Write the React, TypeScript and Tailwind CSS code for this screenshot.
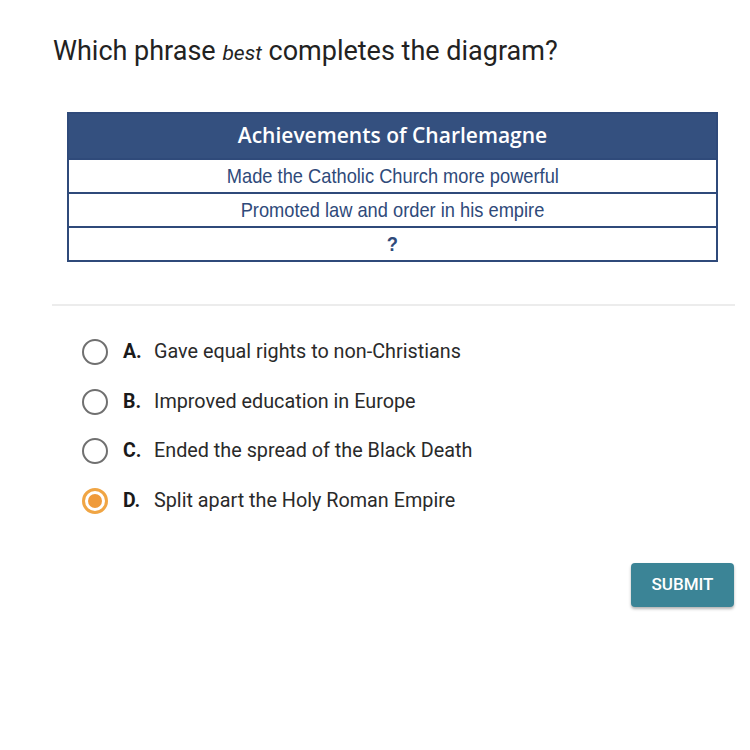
import React from "react";

const OPTIONS = [
  { letter: "A.", text: "Gave equal rights to non-Christians" },
  { letter: "B.", text: "Improved education in Europe" },
  { letter: "C.", text: "Ended the spread of the Black Death" },
  { letter: "D.", text: "Split apart the Holy Roman Empire" },
];

const ROWS = ["Made the Catholic Church more powerful", "Promoted law and order in his empire", "?"];

export default function App() {
  const selected = 3;
  return (
    <div className="w-[750px] h-[750px] bg-white font-['Roboto',sans-serif] text-[#222]">
      <div className="pt-[33px] pl-[53px]">
        <h1 className="text-[27px] leading-[36px] font-normal">
          Which phrase <em className="text-[21px] italic">best</em> completes the diagram?
        </h1>
      </div>

      <div className="ml-[67px] mt-[41px] w-[651px] border-2 border-[#2f4a7a] bg-[#2f4a7a]">
        <div className="h-[44px] flex items-center justify-center bg-[#34507f] text-white text-[21px] font-['Open_Sans',sans-serif] font-semibold">
          Achievements of Charlemagne
        </div>
        {ROWS.map((r, i) => (
          <div
            key={i}
            className="h-[32px] mt-[2px] flex items-center justify-center bg-white text-[#2f4a7a] font-['Liberation_Sans',sans-serif]"
          >
            <span className={i === 2 ? "inline-block text-[21px] font-bold scale-x-[0.87]" : "inline-block text-[21px] scale-x-[0.87]"}>{r}</span>
          </div>
        ))}
      </div>

      <div className="ml-[52px] mt-[42px] w-[683px] h-[2px] bg-[#ececec]" />

      <div className="mt-[33px] ml-[82px] flex flex-col gap-[23.5px]">
        {OPTIONS.map((o, i) => (
          <div key={o.letter} className="flex items-center h-[26px]">
            {i === selected ? (
              <span className="w-[26px] h-[26px] rounded-full border-[3px] border-[#f0a544] flex items-center justify-center">
                <span className="w-[14px] h-[14px] rounded-full bg-[#ef9a3a]" />
              </span>
            ) : (
              <span className="w-[26px] h-[26px] rounded-full border-[2.5px] border-[#707070]" />
            )}
            <span className="ml-[15px] w-[31px] font-bold text-[19.5px] text-[#1a1a1a]">{o.letter}</span>
            <span className="text-[19.8px] text-[#2a2a2a]">{o.text}</span>
          </div>
        ))}
      </div>

      <div className="flex justify-end pr-[16px] mt-[49px]">
        <button className="w-[103px] h-[44px] rounded-[4px] bg-[#3b8496] text-white text-[17px] font-medium shadow-[0_2px_3px_rgba(0,0,0,0.3)]">
          SUBMIT
        </button>
      </div>
    </div>
  );
}
